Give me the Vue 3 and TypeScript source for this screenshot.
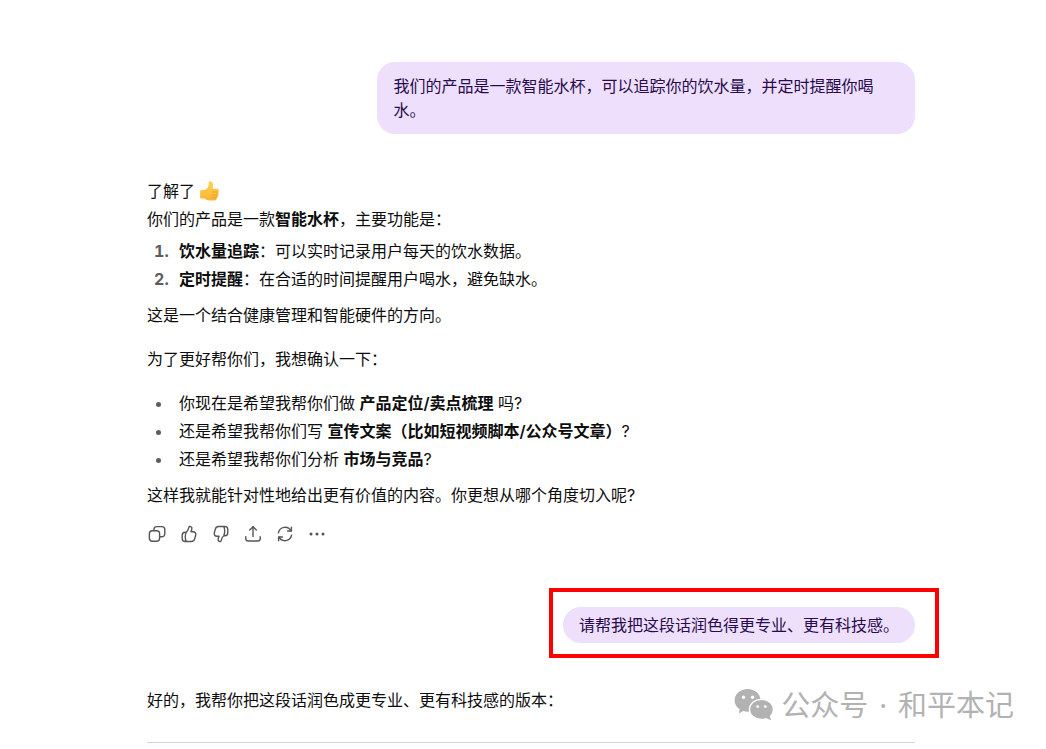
<script setup lang="ts">
interface Action {
  label: string
  paths: string[]
  dots?: boolean
}

const actions: Action[] = [
  {
    label: '复制',
    paths: [
      'M5.4 6.8H9.6A3 3 0 0 1 12.6 9.8V14.2A3 3 0 0 1 9.6 17.2H5.4A3 3 0 0 1 2.4 14.2V9.8A3 3 0 0 1 5.4 6.8Z',
      'M6.9 6.6V5.6A3 3 0 0 1 9.9 2.6H14.8A3 3 0 0 1 17.8 5.6V9.8A3 3 0 0 1 14.8 12.8H12.8',
    ],
  },
  {
    label: '赞',
    paths: [
      'M7.2 8.2C8.6 7.2 9.3 5.6 9.8 3.6C10.1 2.4 11 2.2 11.8 2.6C12.9 3.1 13.1 4.2 12.8 5.2L12 7.8H14.2C16.1 7.8 17.1 9.2 16.7 11L15.8 14.6C15.3 16.6 14.2 17.5 12.3 17.5H6.2C4.2 17.5 3.2 16.3 3.2 14.4V11.4C3.2 9.4 4.1 8.2 6 8.2H7.2C6.5 9.8 6.3 11.2 6.3 12.9C6.3 14.7 6.5 16.1 7.2 17.5',
    ],
  },
  {
    label: '踩',
    paths: [
      'M12.8 11.8C11.4 12.8 10.7 14.4 10.2 16.4C9.9 17.6 9 17.8 8.2 17.4C7.1 16.9 6.9 15.8 7.2 14.8L8 12.2H5.8C3.9 12.2 2.9 10.8 3.3 9L4.2 5.4C4.7 3.4 5.8 2.5 7.7 2.5H13.8C15.8 2.5 16.8 3.7 16.8 5.6V8.6C16.8 10.6 15.9 11.8 14 11.8H12.8C13.5 10.2 13.7 8.8 13.7 7.1C13.7 5.3 13.5 3.9 12.8 2.5',
    ],
  },
  {
    label: '分享',
    paths: ['M10 12.4V2.8', 'M6.7 6L10 2.7L13.3 6', 'M2.8 12.8V14.4A2.6 2.6 0 0 0 5.4 17H14.6A2.6 2.6 0 0 0 17.2 14.4V12.8'],
  },
  {
    label: '重新生成',
    paths: ['M3.4 8.8A6.8 6.8 0 0 1 16 6.8', 'M16.4 3.2V7H12.6', 'M16.6 11.2A6.8 6.8 0 0 1 4 13.2', 'M3.6 16.8V13H7.4'],
  },
  { label: '更多', paths: [], dots: true },
]
</script>

<template>
  <div class="page">
    <main class="thread">
      <div class="bubble">我们的产品是一款智能水杯，可以追踪你的饮水量，并定时提醒你喝水。</div>

      <article class="reply">
        <p>
          了解了
          <svg class="emoji" viewBox="0 0 20 20" role="img" aria-label="点赞">
            <defs>
              <linearGradient id="skin" x1="0" y1="0" x2="0" y2="1">
                <stop offset="0" stop-color="#ffd34d" />
                <stop offset="1" stop-color="#fbb534" />
              </linearGradient>
            </defs>
            <path d="M.2 10.5C.2 9.6.8 9 1.8 9H4.4C6.8 8.3 8.2 6.5 8.6 4.3L8.7 2.2C8.8.8 9.5.2 10.6.4C12.4.7 13.2 2.4 13 4.5L12.4 7.7H16.8C18.3 7.7 19.1 8.6 18.9 9.7C18.8 10.4 18.4 10.8 18 11C18.7 11.5 18.9 12.2 18.6 13C18.4 13.6 18.1 13.9 17.6 14.1C18 14.7 18.1 15.3 17.8 15.9C17.6 16.4 17.1 16.8 16.6 16.9C16.9 18.4 15.9 19.4 14.3 19.5H9.6C7.6 19.5 6 18.7 4.4 17.5H1.6C.6 17.5.1 17 .1 16Z" fill="url(#skin)" />
            <path d="M12.4 11H17.8M12.2 14.1H17.5M12 16.9H16.4" fill="none" stroke="#e0901f" stroke-width=".7" stroke-linecap="round" />
          </svg><br />你们的产品是一款<strong>智能水杯</strong>，主要功能是：
        </p>
        <ol>
          <li><strong>饮水量追踪</strong>：可以实时记录用户每天的饮水数据。</li>
          <li><strong>定时提醒</strong>：在合适的时间提醒用户喝水，避免缺水。</li>
        </ol>
        <p>这是一个结合健康管理和智能硬件的方向。</p>
        <p class="spaced">为了更好帮你们，我想确认一下：</p>
        <ul>
          <li>你现在是希望我帮你们做 <strong>产品定位/卖点梳理</strong> 吗?</li>
          <li>还是希望我帮你们写 <strong>宣传文案（比如短视频脚本/公众号文章）</strong>?</li>
          <li>还是希望我帮你们分析 <strong>市场与竞品</strong>?</li>
        </ul>
        <p>这样我就能针对性地给出更有价值的内容。你更想从哪个角度切入呢?</p>
      </article>

      <div class="actions">
        <button v-for="a in actions" :key="a.label" type="button" :aria-label="a.label">
          <svg viewBox="0 0 20 20" aria-hidden="true">
            <path v-for="d in a.paths" :key="d" :d="d" />
            <g v-if="a.dots" class="dots">
              <circle cx="4" cy="10" r="1.5" />
              <circle cx="10" cy="10" r="1.5" />
              <circle cx="16" cy="10" r="1.5" />
            </g>
          </svg>
        </button>
      </div>

      <div class="bubble short marked">请帮我把这段话润色得更专业、更有科技感。</div>

      <article class="reply">
        <p>好的，我帮你把这段话润色成更专业、更有科技感的版本：</p>
        <hr />
      </article>
    </main>

    <div class="watermark">
      <svg viewBox="0 0 40 34" aria-hidden="true">
        <path d="M13.6 1C6.3 1 .6 6 .6 12.4C.6 16.2 2.6 19.2 5.6 21.2L4.8 25.4L9.2 23C10.6 23.5 12.1 23.7 13.6 23.7C20.9 23.7 26.6 18.8 26.6 12.4C26.6 6 20.9 1 13.6 1Z" />
        <path class="front" d="M27.4 11.4C20.7 11.4 15.5 15.7 15.5 21.4C15.5 27.1 20.7 31.4 27.4 31.4C28.9 31.4 30.3 31.2 31.6 30.8L38.2 33.4L36.6 28.2C38.4 26.4 39.4 24 39.4 21.4C39.4 15.7 34.1 11.4 27.4 11.4Z" />
        <g fill="#fff">
          <circle cx="9.5" cy="9.2" r="1.7" />
          <circle cx="18.6" cy="9.2" r="1.7" />
          <circle cx="23.7" cy="18.6" r="1.4" />
          <circle cx="31.3" cy="18.6" r="1.4" />
        </g>
      </svg>
      <span class="name"><span>公众号</span><span>·</span><span>和平本记</span></span>
    </div>
  </div>
</template>

<style>
body {
  margin: 0;
  background: #fff;
}
</style>

<style scoped>
.page {
  position: relative;
  box-sizing: border-box;
  min-height: 100vh;
  padding: 62px 0 6px 16px;
  font-family: Inter, "Noto Sans CJK SC", sans-serif;
  font-size: 16px;
  color: #0d0d0d;
}

.thread {
  display: flex;
  flex-direction: column;
  max-width: 768px;
  margin: 0 auto;
}

.bubble {
  position: relative;
  align-self: flex-end;
  box-sizing: border-box;
  max-width: 70%;
  padding: 12px 16px;
  border-radius: 18px;
  background: #eee0fd;
  color: #280b4c;
  line-height: 24px;
}

.bubble.short {
  margin-top: 57px;
  padding: 6px 16px;
}

.marked::after {
  content: "";
  position: absolute;
  inset: -19px -24px -15px -14px;
  border: 4px solid #fe0000;
}

.reply {
  margin-top: 43px;
  line-height: 28px;
}

.reply p,
.reply ol,
.reply ul {
  margin: 0;
}

.reply ol,
.reply ul {
  padding-left: 26px;
}

.reply ol {
  margin: 4px 0 8px;
}

.reply ul {
  margin: 16px 0 8px;
}

.reply li {
  padding-left: 6px;
}

.reply li::marker {
  color: #5d5d5d;
}

.reply ol li::marker {
  font-weight: 700;
}

.reply .spaced {
  margin-top: 16px;
}

strong {
  font-weight: 600;
}

.emoji {
  width: 20px;
  height: 20px;
  vertical-align: -4px;
}

.actions {
  display: flex;
  margin: 9px 0 0 -6px;
}

.actions button {
  display: grid;
  place-items: center;
  width: 32px;
  height: 32px;
  padding: 0;
  border: 0;
  background: none;
}

.actions svg {
  width: 20px;
  height: 20px;
  fill: none;
  stroke: #555;
  stroke-width: 1.4;
  stroke-linecap: round;
  stroke-linejoin: round;
}

.actions .dots {
  fill: #555;
  stroke: none;
}

.reply hr {
  height: 1px;
  margin: 28px 0 0;
  border: 0;
  background: #d4d4d4;
}

.watermark {
  position: absolute;
  right: 32px;
  bottom: 24px;
  display: flex;
  align-items: center;
  gap: 7px;
  color: #b2b2b2;
  font-family: "Noto Sans", "Noto Sans CJK SC", sans-serif;
  font-size: 29px;
  line-height: 40px;
  white-space: nowrap;
}

.watermark .name {
  display: flex;
  gap: 11px;
}

.watermark svg {
  width: 40px;
  height: 34px;
  fill: #b2b2b2;
}

.watermark .front {
  stroke: #fff;
  stroke-width: 1.4;
}
</style>
